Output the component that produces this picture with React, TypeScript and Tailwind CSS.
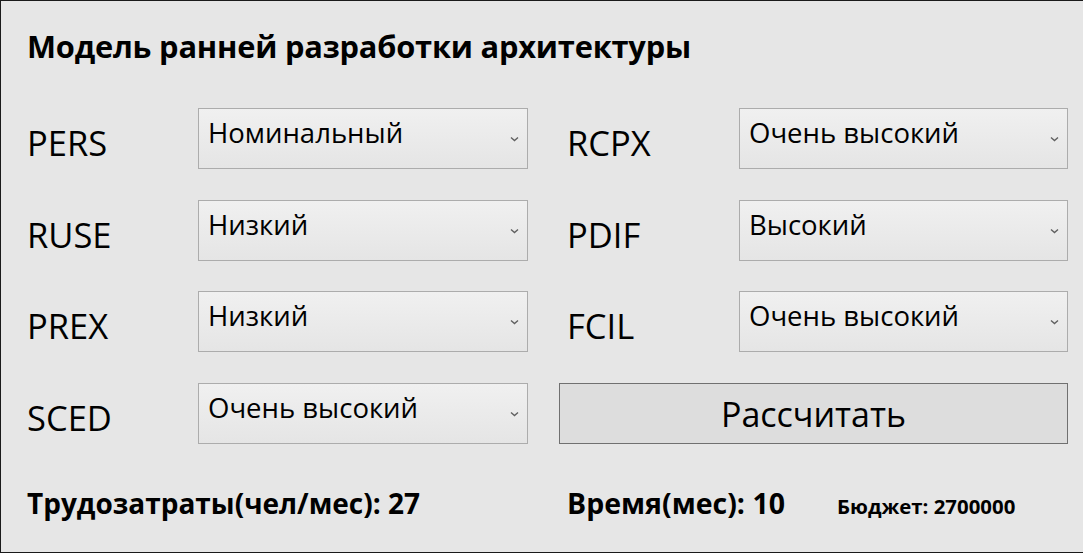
import React from "react";

const font = { fontFamily: '"Open Sans", "Noto Sans", sans-serif' };

const Chevron = () => (
  <svg width="9" height="6" viewBox="0 0 9 6" className="shrink-0">
    <path d="M1 1.5 L4.5 4.5 L8 1.5" fill="none" stroke="#606060" strokeWidth="1.4" />
  </svg>
);

const Combo = ({ value }: { value: string }) => (
  <div className="h-[61px] flex items-start justify-between border border-[#acacac] bg-gradient-to-b from-[#f0f0f0] to-[#e5e5e5] pl-[9px] pr-[8px]">
    <span className="pt-[10px] text-[27.5px] leading-none text-black">{value}</span>
    <span className="self-center pt-[1px]">
      <Chevron />
    </span>
  </div>
);

const Label = ({ text, right }: { text: string; right?: boolean }) => (
  <div
    className={`h-[61px] flex items-center pt-[10px] text-[34.5px] leading-none text-black ${
      right ? "pl-[39px]" : ""
    }`}
  >
    {text}
  </div>
);

const rows: [string, string, string?, string?][] = [
  ["PERS", "Номинальный", "RCPX", "Очень высокий"],
  ["RUSE", "Низкий", "PDIF", "Высокий"],
  ["PREX", "Низкий", "FCIL", "Очень высокий"],
  ["SCED", "Очень высокий"],
];

export default function App() {
  return (
    <div
      style={font}
      className="w-[1083px] h-[553px] bg-[#e6e6e6] border-l border-t border-b border-[#1a1a1a] pl-[26px] overflow-hidden"
    >
      <div className="h-[107px] pt-[30px]">
        <h1 className="text-[30.8px] font-bold leading-none text-black tracking-[-0.2px]">
          Модель ранней разработки архитектуры
        </h1>
      </div>

      <div className="grid grid-cols-[171px_330px_211px_329px] gap-y-[30.5px]">
        {rows.map(([l1, v1, l2, v2]) => (
          <React.Fragment key={l1}>
            <Label text={l1} />
            <Combo value={v1} />
            {l2 && v2 ? (
              <>
                <Label text={l2} right />
                <Combo value={v2} />
              </>
            ) : (
              <div className="col-span-2 ml-[31px]">
                <button className="w-full h-[61px] border border-[#707070] bg-[#dddddd] text-[34px] leading-none text-black pt-[1px]">
                  Рассчитать
                </button>
              </div>
            )}
          </React.Fragment>
        ))}
      </div>

      <div className="flex items-baseline pt-[45px] font-bold text-black">
        <div className="w-[540px] text-[28px] leading-none">Трудозатраты(чел/мес): 27</div>
        <div className="w-[270px] text-[28.5px] leading-none">Время(мес): 10</div>
        <div className="text-[20.4px] leading-none">Бюджет: 2700000</div>
      </div>
    </div>
  );
}
